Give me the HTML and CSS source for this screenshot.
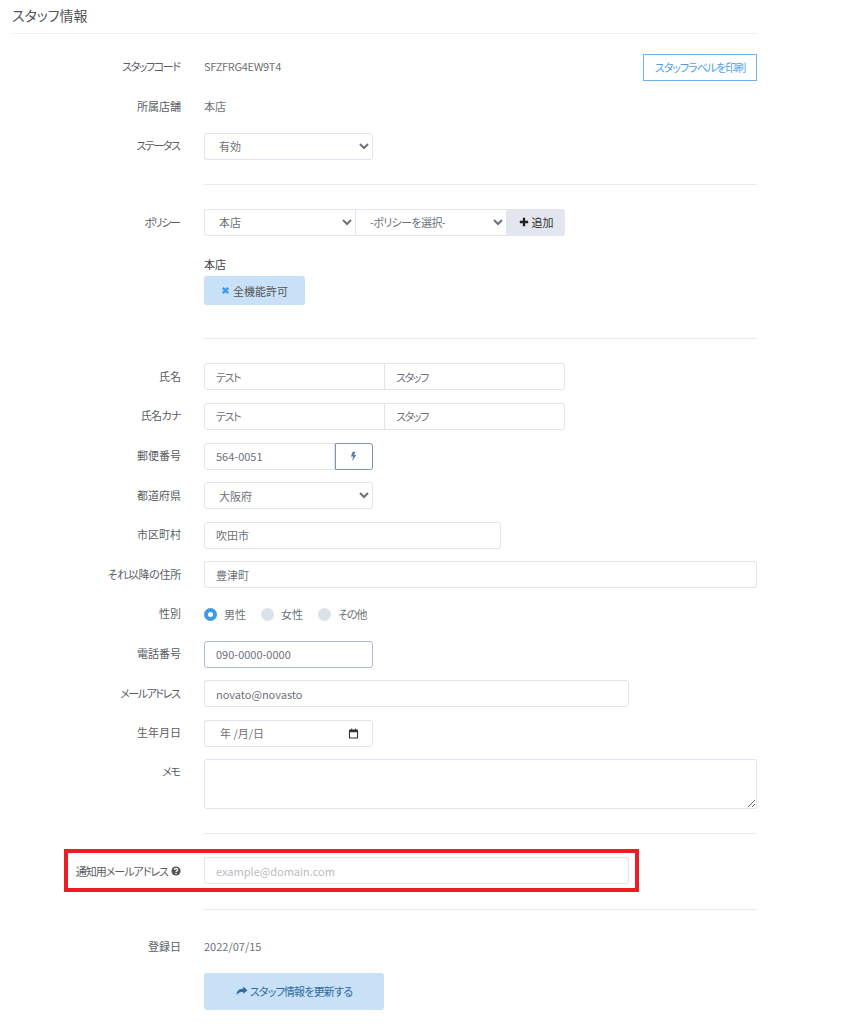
FILE: index.html
```html
<!DOCTYPE html>
<html lang="ja">
  <head>
    <meta charset="utf-8" />
    <title>スタッフ情報</title>
    <link rel="stylesheet" href="styles.css">
  </head>
  <body>
    <div class="page">
      <h1 class="title">スタッフ情報</h1>

      <div class="row">
        <div class="label kana">スタッフコード</div>
        <div class="field field-between">
          <span class="text code">SFZFRG4EW9T4</span>
          <a class="btn-print">スタッフラベルを印刷</a>
        </div>
      </div>
      <div class="row">
        <div class="label">所属店舗</div>
        <div class="field"><span class="text">本店</span></div>
      </div>
      <div class="row">
        <div class="label kana">ステータス</div>
        <div class="field">
          <select class="control w-s"><option>有効</option></select>
        </div>
      </div>

      <div class="rule"></div>

      <div class="row">
        <div class="label kana">ポリシー</div>
        <div class="field">
          <div class="group group-policy w-m">
            <select class="control grow"><option>本店</option></select>
            <select class="control grow kana-soft"><option>-ポリシーを選択-</option></select>
            <a class="btn-add">
              <svg class="icon" viewBox="0 0 12 12"><path d="M4.6 1h2.8v3.6H11v2.8H7.400V11H4.600V7.400H1V4.600h3.600z"/></svg>
              追加
            </a>
          </div>
        </div>
      </div>
      <div class="policy-list">
        <div class="policy-name">本店</div>
        <a class="tag">
          <svg class="icon-x" viewBox="0 0 10 10"><path d="M1 3l2-2 2 2 2-2 2 2-2 2 2 2-2 2-2-2-2 2-2-2 2-2z"/></svg>
          全機能許可
        </a>
      </div>

      <div class="rule"></div>

      <div class="row">
        <div class="label">氏名</div>
        <div class="field">
          <div class="group w-m">
            <input class="control grow kana" value="テスト">
            <input class="control grow kana" value="スタッフ">
          </div>
        </div>
      </div>
      <div class="row">
        <div class="label kana-soft">氏名カナ</div>
        <div class="field">
          <div class="group w-m">
            <input class="control grow kana" value="テスト">
            <input class="control grow kana" value="スタッフ">
          </div>
        </div>
      </div>
      <div class="row">
        <div class="label">郵便番号</div>
        <div class="field">
          <div class="group w-s">
            <input class="control grow" value="564-0051">
            <a class="btn-zip">
              <svg class="icon-bolt" viewBox="0 0 8 12"><path d="M3 .5h3.200L4.600 4.300h2.600L2.400 11.500l1.200-5.400H1z"/></svg>
            </a>
          </div>
        </div>
      </div>
      <div class="row">
        <div class="label">都道府県</div>
        <div class="field">
          <select class="control w-s"><option>大阪府</option></select>
        </div>
      </div>
      <div class="row">
        <div class="label">市区町村</div>
        <div class="field"><input class="control w-city" value="吹田市"></div>
      </div>
      <div class="row">
        <div class="label kana-light">それ以降の住所</div>
        <div class="field"><input class="control w-full" value="豊津町"></div>
      </div>
      <div class="row">
        <div class="label">性別</div>
        <div class="field radios">
          <label class="radio"><span class="dot dot-on"></span>男性</label>
          <label class="radio"><span class="dot"></span>女性</label>
          <label class="radio"><span class="dot"></span><span class="kana-mid">その他</span></label>
        </div>
      </div>
      <div class="row">
        <div class="label">電話番号</div>
        <div class="field"><input class="control w-s is-focus" value="090-0000-0000"></div>
      </div>
      <div class="row">
        <div class="label kana">メールアドレス</div>
        <div class="field"><input class="control w-l" value="novato@novasto"></div>
      </div>
      <div class="row">
        <div class="label">生年月日</div>
        <div class="field">
          <div class="control date w-s">
            <span class="date-text">年 /月/日</span>
            <svg class="icon-cal" viewBox="0 0 12 12"><path d="M2 1.500h1.500V.5h1v1h3V.5h1v1H10a1 1 0 0 1 1 1v8a1 1 0 0 1-1 1H2a1 1 0 0 1-1-1v-8a1 1 0 0 1 1-1zM2.200 4.500v5.800h7.600V4.500z"/></svg>
          </div>
        </div>
      </div>
      <div class="row row-memo">
        <div class="label label-top kana">メモ</div>
        <div class="field"><textarea class="control memo w-full"></textarea></div>
      </div>

      <div class="rule rule-notify"></div>

      <div class="notify-box">
        <div class="label notify-label">
          <span class="kana-mid">通知用メールアドレス</span>
          <svg class="icon-help" viewBox="0 0 12 12">
            <circle cx="6" cy="6" r="5.500"/>
            <path class="help-mark" d="M4.200 4.700c0-2.300 3.700-2.300 3.700-.1 0 1.400-1.900 1.400-1.900 2.700"/>
            <circle class="help-point" cx="6" cy="9" r=".9"/>
          </svg>
        </div>
        <input class="control w-l" placeholder="example@domain.com">
      </div>

      <div class="rule rule-after"></div>

      <div class="row">
        <div class="label">登録日</div>
        <div class="field"><span class="text">2022/07/15</span></div>
      </div>
      <div class="row row-last">
        <div class="label"></div>
        <div class="field">
          <a class="btn-update">
            <svg class="icon-share" viewBox="0 0 14 12"><path d="M13.500 5L8.500.5v2.700C3.500 3.200.5 5.500.5 11.500 2 8.500 4.500 7 8.500 7v2.700z"/></svg>
            スタッフ情報を更新する
          </a>
        </div>
      </div>
    </div>
  </body>
</html>
```

FILE: styles.css
```css
:root {
  --text: #6e7278;
  --label: #5a5d62;
  --border: #e0e4ed;
  --rule: #e9ebf0;
  --blue: #3d9bea;
  --blue-light: #c8e1f6;
}

* {
  box-sizing: border-box;
}

body {
  margin: 0;
  background: #ffffff;
  font-family: "Noto Sans CJK JP", "Noto Sans", sans-serif;
  font-size: 11px;
  font-feature-settings: "palt";
  color: var(--text);
}

.page {
  width: 745px;
  margin-left: 12px;
}

.title {
  margin: 0 0 19.700px;
  height: 34px;
  padding-top: 4px;
  border-bottom: 1px solid #eef0f4;
  font-size: 14px;
  line-height: 22px;
  font-weight: 400;
  color: #555555;
}

.row {
  display: grid;
  grid-template-columns: 169px 1fr;
  column-gap: 23px;
  height: 27px;
  margin-bottom: 12.600px;
}

.row-memo {
  height: 49.500px;
}

.row-last {
  height: 37px;
  margin-bottom: 0;
}

.label {
  display: flex;
  align-items: center;
  justify-content: flex-end;
  padding-bottom: 2px;
  color: var(--label);
}

.label-top {
  align-items: flex-start;
  padding-top: 4px;
}

/* the source font sets kana tighter than Noto does */
.kana {
  letter-spacing: -1.400px;
}

.label.kana {
  padding-right: 1.500px;
}

.kana-mid {
  letter-spacing: -1px;
}

.kana-soft {
  letter-spacing: -.6px;
}

.kana-light {
  letter-spacing: -.3px;
}

.text {
  padding-bottom: 2px;
}

.code {
  letter-spacing: -.3px;
}

.field {
  display: flex;
  align-items: center;
}

.field-between {
  justify-content: space-between;
}

.rule {
  height: 1px;
  margin: 24.500px 0 24px 192px;
  background: var(--rule);
}

.rule-notify {
  margin-bottom: 15px;
}

.rule-after {
  margin-top: 17px;
  margin-bottom: 23px;
}

.control {
  height: 27px;
  padding: 0 11px;
  border: 1px solid var(--border);
  border-radius: 3px;
  background: #ffffff;
  font-family: inherit;
  font-size: inherit;
  font-feature-settings: inherit;
  color: var(--text);
  outline: none;
}

select.control {
  padding: 0 10px;
}

.control::placeholder {
  color: #b9bcc2;
}

.is-focus {
  border-color: #a9b9d3;
}

.w-s {
  width: 168.500px;
}

.w-m {
  width: 361px;
}

.w-city {
  width: 297px;
}

.w-l {
  width: 425px;
}

.w-full {
  width: 553px;
}

.group {
  display: flex;
  height: 27px;
}

.group .control {
  border-radius: 0;
  min-width: 0;
}

.group .control:first-child {
  border-radius: 3px 0 0 3px;
}

.group .control + .control {
  border-left: 1px solid var(--border);
  margin-left: -1px;
}

.group .control:last-child {
  border-radius: 0 3px 3px 0;
}

.group-policy select.control {
  padding-bottom: 2px;
}

.grow {
  flex: 1 1 0;
}

.btn-print {
  display: flex;
  align-items: center;
  justify-content: center;
  width: 114px;
  height: 27px;
  border: 1px solid #6db3ee;
  letter-spacing: -1px;
  color: #4f9fe8;
}

.btn-add {
  display: flex;
  flex: 0 0 58px;
  align-items: center;
  justify-content: center;
  gap: 3px;
  padding-bottom: 2px;
  background: #e3e6ef;
  border-radius: 0 3px 3px 0;
  color: #333333;
}

.icon {
  width: 10px;
  height: 10px;
  fill: #222222;
}

.policy-list {
  margin: 21px 0 33px 192px;
}

.policy-name {
  height: 15px;
  margin-bottom: 4px;
  line-height: 15px;
  color: #444444;
}

.tag {
  display: flex;
  align-items: center;
  gap: 3px;
  width: 101px;
  height: 29px;
  padding-left: 17px;
  border-radius: 3px;
  background: var(--blue-light);
  color: #555555;
}

.icon-x {
  width: 9px;
  height: 9px;
  fill: var(--blue);
}

.btn-zip {
  display: flex;
  flex: 0 0 38px;
  align-items: center;
  justify-content: center;
  border: 1px solid #8294b5;
  border-radius: 0 3px 3px 0;
}

.icon-bolt {
  width: 7px;
  height: 11px;
  fill: #5a7bad;
}

.radios {
  gap: 15px;
}

.radio {
  display: flex;
  align-items: center;
  gap: 7px;
}

.dot {
  width: 13px;
  height: 13px;
  border-radius: 50%;
  background: #dde1e8;
}

.dot-on {
  border: 4px solid var(--blue);
  background: #ffffff;
}

.date {
  display: flex;
  align-items: center;
  justify-content: space-between;
  padding: 0 13px 0 15px;
}

.icon-cal {
  width: 11px;
  height: 11px;
  fill: #333333;
}

.memo {
  display: block;
  height: 49.500px;
}

.notify-box {
  display: grid;
  grid-template-columns: 113px 425px;
  column-gap: 23px;
  align-items: center;
  width: 575px;
  height: 43px;
  margin-left: 52px;
  border: 4px solid #ee1c25;
  background: #ffffff;
}

.notify-label {
  gap: 3px;
  padding-bottom: 0;
  white-space: nowrap;
}

.icon-help {
  flex: none;
  width: 10px;
  height: 10px;
  fill: #555555;
}

.help-mark {
  fill: none;
  stroke: #ffffff;
  stroke-width: 1.500;
}

.help-point {
  fill: #ffffff;
}

.btn-update {
  display: flex;
  align-items: center;
  justify-content: center;
  gap: 2px;
  width: 180px;
  height: 37px;
  border-radius: 3px;
  background: var(--blue-light);
  letter-spacing: -.8px;
  color: #2f6a9e;
}

.icon-share {
  width: 12px;
  height: 10px;
  fill: #2f6a9e;
}
```
